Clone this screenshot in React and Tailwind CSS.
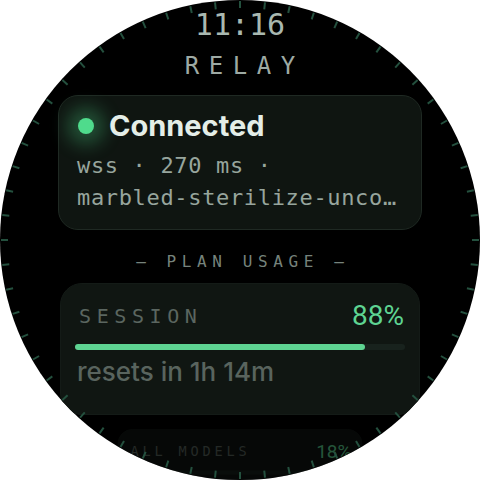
const mono = { fontFamily: '"DejaVu Sans Mono", "Liberation Mono", monospace' };
const sans = { fontFamily: 'Inter, "Noto Sans", sans-serif' };
const num = { fontFamily: 'Roboto, Inter, sans-serif' };

function Ticks() {
  const ticks = Array.from({ length: 60 }, (_, i) => i * 6);
  return (
    <svg className="pointer-events-none absolute inset-0" width="480" height="480" viewBox="0 0 480 480">
      {ticks.map((deg) => {
        const a = (deg * Math.PI) / 180;
        const x1 = 240 + Math.sin(a) * 232;
        const y1 = 240 - Math.cos(a) * 232;
        const x2 = 240 + Math.sin(a) * 239;
        const y2 = 240 - Math.cos(a) * 239;
        return (
          <line key={deg} x1={x1} y1={y1} x2={x2} y2={y2} stroke="#24503e" strokeWidth="2" />
        );
      })}
    </svg>
  );
}

function UsageCard({ label, pct, note, className = "" }) {
  return (
    <div className={`w-[360px] shrink-0 rounded-[22px] border border-[#141b17] bg-[#101612] px-[14px] pb-[26px] pt-[16px] ${className}`}>
      <div className="flex items-center justify-between pl-[4px] pr-[1px]">
        <span className="text-[20px] leading-[28px] tracking-[0.28em] text-[#5b6660]" style={mono}>
          {label}
        </span>
        <span className="text-[28px] leading-[32px] text-[#5ed492]" style={num}>
          {pct}%
        </span>
      </div>
      <div className="mt-[12px] h-[6px] w-full rounded-full bg-[#18221d]">
        <div className="h-full rounded-full bg-[#5ed492]" style={{ width: `${pct}%` }} />
      </div>
      <div className="mt-[6px] pl-[2px] text-[26px] font-medium leading-[32px] text-[#59645e]" style={sans}>
        {note}
      </div>
    </div>
  );
}

export default function App() {
  return (
    <div className="h-[480px] w-[480px] bg-white">
      <div className="relative h-[480px] w-[480px] overflow-hidden rounded-full bg-black">
        <div className="flex flex-col items-center pt-[8px]">
          <div className="text-[30px] leading-[34px] text-[#a9b8b0]" style={mono}>
            11:16
          </div>
          <div className="mt-[10px] pl-[0.4em] text-[24px] leading-[28px] tracking-[0.4em] text-[#9eaaa4]" style={mono}>
            RELAY
          </div>

          <div className="mt-[15px] w-[364px] rounded-[20px] border border-[#1f2923] bg-[#0f1511] px-[18px] pb-[15px] pt-[12px]">
            <div className="flex items-center gap-[15px]">
              <span className="ml-[1px] h-[16px] w-[16px] rounded-full bg-[#4fdb8c] shadow-[0_0_18px_11px_rgba(79,219,140,0.3)]" />
              <span className="text-[29px] font-bold leading-[36px] text-[#e4eee8]" style={sans}>
                Connected
              </span>
            </div>
            <div className="mt-[6px] text-[22px] leading-[32px] tracking-[0.03em] text-[#97a59d]" style={mono}>
              <div>wss · 270 ms ·</div>
              <div className="w-[324px] truncate">marbled-sterilize-uncommon</div>
            </div>
          </div>

          <div className="mt-[20px] pl-[0.35em] text-[16px] leading-[24px] tracking-[0.35em] text-[#76837c]" style={mono}>
            — PLAN USAGE —
          </div>

          <UsageCard label="SESSION" pct={88} note="resets in 1h 14m" className="mt-[9px]" />
          <UsageCard
            label="ALL MODELS"
            pct={18}
            note="resets in 4d 2h"
            className="mt-[14px] origin-top scale-[0.68] opacity-40"
          />
        </div>
        <Ticks />
      </div>
    </div>
  );
}
